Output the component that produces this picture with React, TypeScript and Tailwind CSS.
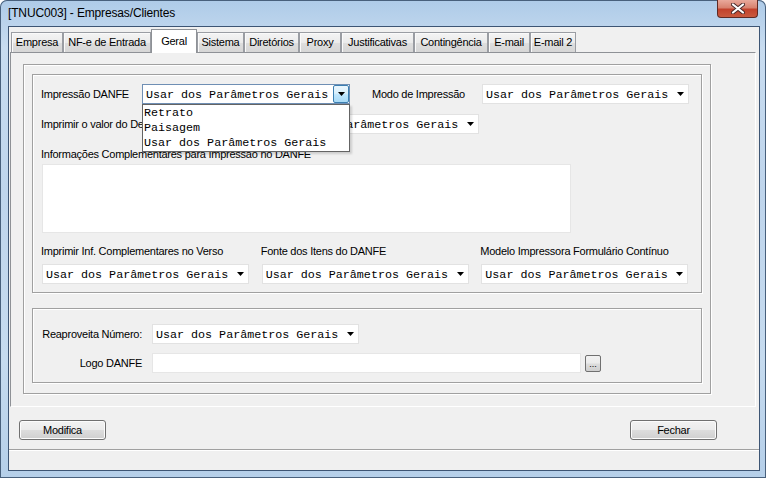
import React from 'react';

const sans = "font-['Liberation_Sans',Arial,sans-serif]";
const mono = "font-['Liberation_Mono','Courier_New',monospace]";

const tabs = [
    { label: 'Empresa', w: 'w-[52px]' },
    { label: 'NF-e de Entrada', w: 'w-[88px]' },
    { label: 'Geral', w: 'w-[46px]', active: true },
    { label: 'Sistema', w: 'w-[47px]' },
    { label: 'Diretórios', w: 'w-[55px]' },
    { label: 'Proxy', w: 'w-[42px]' },
    { label: 'Justificativas', w: 'w-[73px]' },
    { label: 'Contingência', w: 'w-[74px]' },
    { label: 'E-mail', w: 'w-[42px]' },
    { label: 'E-mail 2', w: 'w-[46px]' },
];

function Arrow() {
    return (
        <svg width="7" height="4" viewBox="0 0 7 4" className="shrink-0">
            <path d="M0 0h7L3.5 4z" fill="#000" />
        </svg>
    );
}

function Combo({ w, value = 'Usar dos Parâmetros Gerais' }: { w: string; value?: string }) {
    return (
        <div className={`${w} h-[20px] bg-white border border-[#e2e2e2] flex items-center justify-between pl-[3px] pr-[4px]`}>
            <span className={`${mono} text-[11.7px] pt-[3px] text-black tracking-normal whitespace-nowrap overflow-hidden`}>{value}</span>
            <Arrow />
        </div>
    );
}

function Button({ label, className = '' }: { label: string; className?: string }) {
    return (
        <div className={`w-[87px] h-[20px] rounded-[3px] border border-[#707070] bg-[linear-gradient(180deg,#f2f2f2_0%,#ebebeb_48%,#dddddd_52%,#cfcfcf_100%)] shadow-[inset_0_0_0_1px_#fcfcfc] flex items-center justify-center text-[11px] tracking-[-0.25px] text-black ${className}`}>
            {label}
        </div>
    );
}

export default function App() {
    return (
        <div className={`${sans} w-[766px] h-[478px] relative overflow-hidden rounded-t-[7px] bg-[linear-gradient(180deg,#aecbe8_0%,#c8dcf0_10%,#bfd5ec_40%,#c6dbef_75%,#b5cfe9_100%)] shadow-[inset_0_0_0_1px_#48607c]`}>
            {/* title bar */}
            <div className="h-[26px] flex items-center pl-[8px] text-[12px] tracking-[-0.15px] text-black">
                [TNUC003] - Empresas/Clientes
            </div>
            <div className="absolute top-0 left-[717px] w-[41px] h-[18px] rounded-b-[4px] border border-t-0 border-[#5f2a24] bg-[linear-gradient(180deg,#e9a99b_0%,#d8826f_45%,#c2422c_55%,#c95a3f_100%)] flex items-center justify-center">
                <svg width="14" height="11" viewBox="0 0 14 11">
                    <path d="M2 1.5l10 8M12 1.5l-10 8" stroke="#4a2a2a" strokeWidth="4" strokeLinecap="round" />
                    <path d="M2 1.5l10 8M12 1.5l-10 8" stroke="#fff" strokeWidth="2.2" strokeLinecap="round" />
                </svg>
            </div>

            {/* client area */}
            <div className="ml-[8px] w-[752px] h-[445px] border border-[#3d5574] bg-[#f0f0f0] flex flex-col">
                {/* tab strip */}
                <div className="h-[25px] pl-[2px] flex items-end">
                    {tabs.map((t) =>
                        t.active ? (
                            <div key={t.label} className={`${t.w} h-[24px] -mb-px relative z-10 border border-b-0 border-[#8e9196] bg-white flex items-center justify-center pb-[1px] text-[11px] tracking-[-0.25px] text-black`}>
                                {t.label}
                            </div>
                        ) : (
                            <div key={t.label} className={`${t.w} h-[20px] border border-b-0 border-[#9a9da3] bg-[linear-gradient(180deg,#f4f4f4_0%,#ebebeb_50%,#dedede_52%,#d6d6d6_100%)] shadow-[inset_1px_1px_0_#fafafa] flex items-center justify-center text-[11px] tracking-[-0.25px] text-black`}>
                                {t.label}
                            </div>
                        )
                    )}
                </div>

                {/* tab panel */}
                <div className="ml-[1px] w-[746px] h-[355px] border border-[#8e9196] border-r-white border-b-white bg-[#f0f0f0] pt-[11px] pl-[12px]">
                    <div className="w-[688px] h-[330px] border border-[#a0a0a0] shadow-[1px_1px_0_#fff,inset_1px_1px_0_#fff] pt-[9px] pl-[8px]">
                        {/* group A */}
                        <div className="w-[670px] h-[219px] border border-[#a0a0a0] shadow-[1px_1px_0_#fff,inset_1px_1px_0_#fff] pl-[8px] text-[11px] tracking-[-0.25px] text-black">
                            <div className="mt-[9px] h-[20px] flex items-center">
                                <span className="w-[101px]">Impressão DANFE</span>
                                <div className="w-[208px] h-[20px] relative z-20">
                                    <div className="h-[20px] bg-white border border-[#6f8fb4] flex items-center justify-between pl-[3px]">
                                        <span className={`${mono} text-[11.7px] pt-[3px] text-black tracking-normal whitespace-nowrap`}>Usar dos Parâmetros Gerais</span>
                                        <div className="w-[16px] h-[18px] border border-[#3c7fb1] rounded-[2px] bg-[linear-gradient(180deg,#eaf6fd_0%,#d9f0fc_45%,#bee6fd_55%,#a7d9f5_100%)] flex items-center justify-center">
                                            <Arrow />
                                        </div>
                                    </div>
                                    <div className={`absolute left-0 top-[20px] w-[208px] h-[48px] bg-white border border-[#646464] shadow-[2px_2px_2px_rgba(0,0,0,0.15)] ${mono} text-[11.7px] tracking-normal text-black`}>
                                        <div className="h-[15px] flex items-center pl-[1px] pt-[2px]">Retrato</div>
                                        <div className="h-[15px] flex items-center pl-[1px] pt-[2px]">Paisagem</div>
                                        <div className="h-[15px] flex items-center pl-[1px] pt-[2px]">Usar dos Parâmetros Gerais</div>
                                    </div>
                                </div>
                                <span className="ml-[22px] w-[110px]">Modo de Impressão</span>
                                <Combo w="w-[207px]" />
                            </div>
                            <div className="mt-[10px] h-[20px] flex items-center">
                                <span className="w-[231px] whitespace-nowrap overflow-hidden">Imprimir o valor do Desconto no DANFE</span>
                                <Combo w="w-[207px]" />
                            </div>
                            <div className="mt-[12px] h-[16px] flex items-center">Informações Complementares para Impressão no DANFE</div>
                            <div className="mt-[2px] ml-[1px] w-[529px] h-[69px] bg-white border border-[#e6e6e6]" />
                            <div className="mt-[10px] ml-[1px] flex">
                                {['Imprimir Inf. Complementares no Verso', 'Fonte dos Itens do DANFE', 'Modelo Impressora Formulário Contínuo'].map((l) => (
                                    <div key={l} className="w-[220px]">
                                        <div className="h-[16px] flex items-center -ml-[1px]">{l}</div>
                                        <div className="mt-[5px]">
                                            <Combo w="w-[207px]" />
                                        </div>
                                    </div>
                                ))}
                            </div>
                        </div>

                        {/* group B */}
                        <div className="mt-[15px] w-[670px] h-[75px] border border-[#a0a0a0] shadow-[1px_1px_0_#fff,inset_1px_1px_0_#fff] text-[11px] tracking-[-0.25px] text-black">
                            <div className="mt-[15px] h-[20px] flex items-center">
                                <span className="w-[119px] pr-[10px] text-right whitespace-nowrap">Reaproveita Número:</span>
                                <Combo w="w-[207px]" />
                            </div>
                            <div className="mt-[9px] h-[20px] flex items-center">
                                <span className="w-[119px] pr-[10px] text-right">Logo DANFE</span>
                                <div className="w-[429px] h-[20px] bg-white border border-[#e6e6e6]" />
                                <div className="ml-[4px] w-[16px] h-[17px] rounded-[2px] border border-[#707070] bg-[linear-gradient(180deg,#f2f2f2_0%,#ebebeb_48%,#dddddd_52%,#cfcfcf_100%)] flex items-end justify-center pb-[2px] text-[9px] leading-none tracking-normal">
                                    ...
                                </div>
                            </div>
                        </div>
                    </div>
                </div>

                {/* buttons */}
                <div className="mt-[13px] h-[20px] pl-[10px] pr-[42px] flex justify-between">
                    <Button label="Modifica" />
                    <Button label="Fechar" />
                </div>

                {/* status bar */}
                <div className="mt-[9px] flex-1 border-t border-[#a0a0a0] shadow-[inset_0_1px_0_#fff]" />
            </div>
        </div>
    );
}
